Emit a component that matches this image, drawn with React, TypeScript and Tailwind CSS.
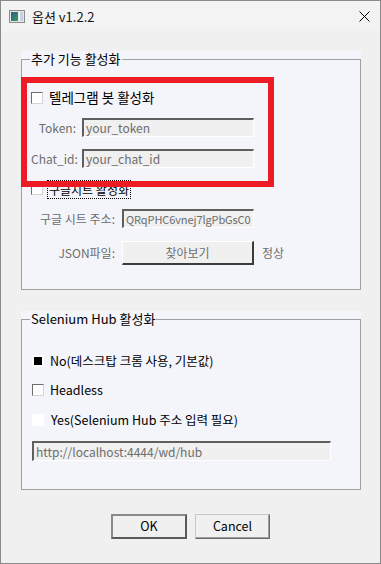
import React from "react";

const font = { fontFamily: "'Noto Sans CJK KR', 'Noto Sans', sans-serif" };

function CheckBox({ checked = false }: { checked?: boolean }) {
  return (
    <span className="flex h-[12px] w-[12px] shrink-0 items-center justify-center border border-t-[#6d6d6d] border-l-[#6d6d6d] border-r-[#d4d4d4] border-b-[#d4d4d4] bg-white">
      {checked ? <span className="h-[8px] w-[8px] bg-black" /> : null}
    </span>
  );
}

function Sunken({ width, children }: { width: string; children: React.ReactNode }) {
  return (
    <div
      className={`${width} flex h-[19px] items-center overflow-hidden whitespace-nowrap border-t-2 border-l-2 border-r border-b border-t-[#5f5f5f] border-l-[#5f5f5f] border-r-white border-b-white bg-[#f0f0f0] pl-[2px] text-[12px] leading-none text-[#6d6d6d]`}
    >
      {children}
    </div>
  );
}

function GroupBox({ title, children, className }: { title: string; children: React.ReactNode; className: string }) {
  return (
    <div className={`w-[340px] bg-[#f4f5fa] ${className}`}>
      <fieldset className="h-full border border-[#a0a0a0]">
        <legend className="ml-[8px] px-[1px] text-[13px] leading-[16px] text-black">{title}</legend>
        {children}
      </fieldset>
    </div>
  );
}

export default function App() {
  return (
    <div
      style={font}
      className="relative flex h-[564px] w-[381px] flex-col border border-[#8a8a8a] bg-[#f0f0f0] text-black"
    >
      {/* title bar */}
      <div className="flex h-[30px] shrink-0 items-center bg-[#f3f3f3]">
        <svg width="16" height="13" viewBox="0 0 16 13" className="ml-[8px]">
          <defs>
            <linearGradient id="ic" x1="0" y1="0" x2="1" y2="1">
              <stop offset="0" stopColor="#2d5f86" />
              <stop offset="1" stopColor="#3a9a5e" />
            </linearGradient>
          </defs>
          <rect x="0.5" y="0.5" width="15" height="12" fill="#e6e6e6" stroke="#8c8c8c" />
          <rect x="2" y="2" width="7" height="9" fill="url(#ic)" />
          <rect x="10" y="2" width="4" height="9" fill="#c3d2e4" />
          <rect x="10" y="2" width="1" height="9" fill="#ffffff" />
        </svg>
        <span className="ml-[7px] text-[13px] leading-none text-[#111]">옵션 v1.2.2</span>
        <svg width="11" height="11" viewBox="0 0 11 11" className="ml-auto mr-[10px]">
          <path d="M0.5 0.5 L10.5 10.5 M10.5 0.5 L0.5 10.5" stroke="#000" strokeWidth="1" />
        </svg>
      </div>

      {/* client */}
      <div className="flex flex-col pl-[20px] pt-[20px]">
        <GroupBox title="추가 기능 활성화" className="h-[239px]">
          <div className="flex flex-col pl-[9px] pt-[21px]">
            <div className="flex h-[20px] items-center gap-[6px]">
              <CheckBox />
              <span className="text-[13.5px] leading-none">텔레그램 봇 활성화</span>
            </div>
            <div className="mt-[10px] flex items-center gap-[6px]">
              <span className="w-[45px] whitespace-nowrap text-right text-[12px] leading-none text-[#6d6d6d]">Token:</span>
              <Sunken width="w-[172px]">your_token</Sunken>
            </div>
            <div className="mt-[12px] flex items-center gap-[6px]">
              <span className="w-[45px] whitespace-nowrap text-right text-[12px] leading-none text-[#6d6d6d]">Chat_id:</span>
              <Sunken width="w-[172px]">your_chat_id</Sunken>
            </div>
            <div className="mt-[11px] flex h-[20px] items-center gap-[4px]">
              <CheckBox />
              <span className="border border-dotted border-black px-[1px] text-[12px] leading-[17px]">구글시트 활성화</span>
            </div>
            <div className="mt-[10px] flex items-center gap-[7px]">
              <span className="w-[84px] whitespace-nowrap text-right text-[12px] leading-none text-[#6d6d6d]">구글 시트 주소:</span>
              <Sunken width="w-[132px]">
                <span className="text-[11px] tracking-[-0.1px]">QRqPHC6vnej7lgPbGsC0</span>
              </Sunken>
            </div>
            <div className="mt-[13px] flex items-center gap-[7px]">
              <span className="w-[84px] text-right text-[12px] leading-none text-[#6d6d6d]">JSON파일:</span>
              <button
                type="button"
                className="flex h-[24px] w-[132px] items-center justify-center border-t border-l border-r-2 border-b-2 border-t-white border-l-white border-r-[#3c3c3c] border-b-[#3c3c3c] bg-[#f0f0f0] text-[12px] leading-none text-[#6d6d6d]"
              >
                찾아보기
              </button>
              <span className="ml-[1px] text-[12px] leading-none text-[#6d6d6d]">정상</span>
            </div>
          </div>
        </GroupBox>

        <GroupBox title="Selenium Hub 활성화" className="mt-[21px] h-[179px]">
          <div className="flex flex-col pl-[10px] pt-[24px]">
            <div className="flex h-[20px] items-center gap-[6px]">
              <span className="flex h-[12px] w-[12px] items-center justify-center bg-white">
                <span className="h-[8px] w-[8px] bg-black" />
              </span>
              <span className="text-[12.5px] leading-none">No(데스크탑 크롬 사용, 기본값)</span>
            </div>
            <div className="mt-[9px] flex h-[20px] items-center gap-[6px]">
              <CheckBox />
              <span className="text-[12.5px] leading-none">Headless</span>
            </div>
            <div className="mt-[10px] flex h-[20px] items-center gap-[7px]">
              <span className="h-[12px] w-[12px] bg-white" />
              <span className="text-[12.5px] leading-none">Yes(Selenium Hub 주소 입력 필요)</span>
            </div>
            <div className="mt-[11px]">
              <div className="flex h-[20px] w-[299px] items-center border-t-2 border-l-2 border-r border-b border-t-[#5f5f5f] border-l-[#5f5f5f] border-r-white border-b-white bg-[#f0f0f0] pl-[2px] text-[12px] leading-none text-[#6d6d6d]">
                http://localhost:4444/wd/hub
              </div>
            </div>
          </div>
        </GroupBox>
      </div>

      <div className="mt-[24px] flex justify-center gap-[8px]">
        <button
          type="button"
          className="h-[25px] w-[76px] border-2 border-t-[#8a8a8a] border-l-[#8a8a8a] border-r-[#5a5a5a] border-b-[#5a5a5a] bg-[#f0f0f0] text-[12.5px] leading-none"
        >
          OK
        </button>
        <button
          type="button"
          className="h-[25px] w-[75px] border border-t-[#c8c8c8] border-l-[#c8c8c8] border-r-[#6a6a6a] border-b-[#6a6a6a] bg-[#f0f0f0] text-[12.5px] leading-none shadow-[inset_-1px_-1px_0_#a0a0a0]"
        >
          Cancel
        </button>
      </div>

      {/* red annotation box drawn over the dialog */}
      <div className="pointer-events-none absolute left-[20px] top-[76px] h-[110px] w-[253px] border-[6px] border-[#ed1c24]" />
    </div>
  );
}
